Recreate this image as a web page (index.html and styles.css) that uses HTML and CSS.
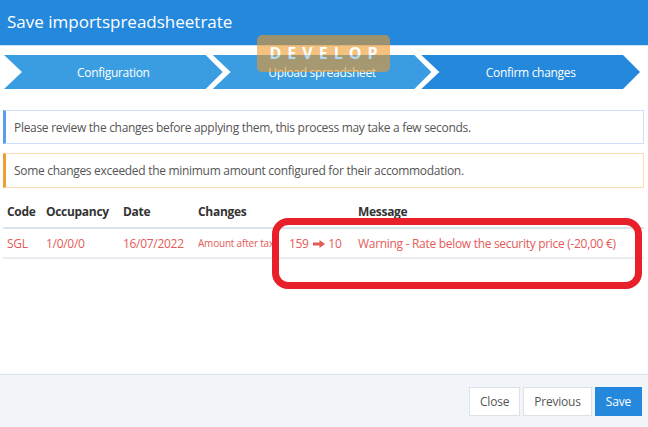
FILE: index.html
```html
<!DOCTYPE html>
<html>
<head>
<meta charset="utf-8">
<link rel="stylesheet" href="styles.css">
</head>
<body>
<div class="page">
  <div class="header">Save importspreadsheetrate</div>
  <div class="steps">
    <div class="step">Configuration</div>
    <div class="step">Upload spreadsheet</div>
    <div class="step active">Confirm changes</div>
  </div>
  <div class="content">
    <div class="alert info">Please review the changes before applying them, this process may take a few seconds.</div>
    <div class="alert warn">Some changes exceeded the minimum amount configured for their accommodation.</div>
    <table class="grid">
      <colgroup>
        <col class="c1"><col class="c2"><col class="c3"><col class="c4"><col class="c5"><col class="c6">
      </colgroup>
      <thead>
        <tr><th>Code</th><th>Occupancy</th><th>Date</th><th>Changes</th><th></th><th>Message</th></tr>
      </thead>
      <tbody>
        <tr class="danger">
          <td>SGL</td><td>1/0/0/0</td><td>16/07/2022</td>
          <td class="small"><div class="clip">Amount after tax</div></td>
          <td>159 <svg class="arrow" width="12" height="8" viewBox="0 0 12 8"><path d="M0 2.6H6.5V0L12 4L6.5 8V5.4H0Z" fill="currentColor"/></svg> 10</td>
          <td>Warning - Rate below the security price (-20,00 €)</td>
        </tr>
      </tbody>
    </table>
  </div>
  <div class="footer">
    <button class="btn">Close</button>
    <button class="btn">Previous</button>
    <button class="btn primary">Save</button>
  </div>
  <div class="badge">DEVELOP</div>
  <div class="annot"></div>
</div>
</body>
</html>
```
FILE: styles.css
```css
* { box-sizing: border-box; }
html, body { margin: 0; padding: 0; }
body {
  font-family: "Open Sans", "Liberation Sans", sans-serif;
  color: #555;
  background: #fff;
}
.page {
  position: relative;
  height: 427px;
  display: flex;
  flex-direction: column;
  overflow: hidden;
}
.header {
  height: 46px;
  background: #2489dd;
  color: #fff;
  font-size: 17px;
  line-height: 43px;
  padding-left: 7px;
  border-bottom: 1px solid #cfe2f5;
}
.steps {
  display: flex;
  height: 34px;
  margin-top: 9px;
  padding: 0 8px 0 4px;
}
.step {
  flex: 1;
  background: #3a9de1;
  color: #fff;
  font-size: 12px;
  letter-spacing: -0.3px;
  display: flex;
  align-items: center;
  justify-content: center;
  clip-path: polygon(0 0, calc(100% - 17px) 0, 100% 50%, calc(100% - 17px) 100%, 0 100%, 18px 50%);
}
.step + .step { margin-left: -10px; }
.step.active { background: #2489dd; }
.content {
  padding: 0 4px 0 3px;
}
.alert {
  font-size: 12px;
  letter-spacing: -0.3px;
  color: #555;
  padding: 0 8px;
  height: 34px;
  display: flex;
  align-items: center;
  border: 1px solid;
  border-left-width: 3px;
}
.alert.info {
  margin-top: 21px;
  border-color: #cde0fb;
  border-left-color: #5a9cf2;
}
.alert.warn {
  margin-top: 9px;
  height: 35px;
  border-color: #fbdcb3;
  border-left-color: #f0a032;
}
.grid {
  width: 100%;
  margin-top: 8px;
  border-collapse: collapse;
  table-layout: fixed;
  font-size: 12px;
  letter-spacing: -0.3px;
}
.c1 { width: 39px; }
.c2 { width: 77px; }
.c3 { width: 75px; }
.c4 { width: 91px; }
.c5 { width: 69px; }
.grid th {
  text-align: left;
  font-weight: 700;
  color: #333;
  height: 32px;
  padding: 0 4px;
  border-bottom: 2px solid #dde3ea;
}
.grid td {
  height: 30px;
  padding: 0 4px;
  border-bottom: 2px solid #e9edf1;
  white-space: nowrap;
}
.danger td { color: #e35b58; }
.grid td.small { font-size: 10px; letter-spacing: -0.2px; }
.clip { overflow: hidden; width: 80px; }
.arrow { vertical-align: 0; margin: 0 1px; }
.footer {
  margin-top: auto;
  height: 53px;
  background: #f1f5f9;
  border-top: 1px solid #dbe1e8;
  display: flex;
  justify-content: flex-end;
  align-items: flex-start;
  gap: 3px;
  padding: 12px 6px 0 0;
}
.btn {
  height: 29px;
  font-family: "Open Sans", "Liberation Sans", sans-serif;
  font-size: 12px;
  letter-spacing: -0.2px;
  color: #555;
  background: #fff;
  border: 1px solid #dde2e7;
  padding: 0 10px;
  margin: 0;
}
.btn.primary {
  background: #2489dd;
  border-color: #2489dd;
  color: #fff;
}
.badge {
  position: absolute;
  left: 257px;
  top: 35px;
  width: 133px;
  height: 37px;
  border-radius: 5px;
  background: rgb(238, 152, 41);
  opacity: 0.6;
  color: #fff;
  font-weight: 700;
  font-size: 16px;
  letter-spacing: 6px;
  padding-left: 6px;
  padding-bottom: 1px;
  display: flex;
  align-items: center;
  justify-content: center;
}
.annot {
  position: absolute;
  left: 272px;
  top: 218px;
  width: 370px;
  height: 71px;
  border: 7px solid #e8202a;
  border-radius: 16px;
}
```
